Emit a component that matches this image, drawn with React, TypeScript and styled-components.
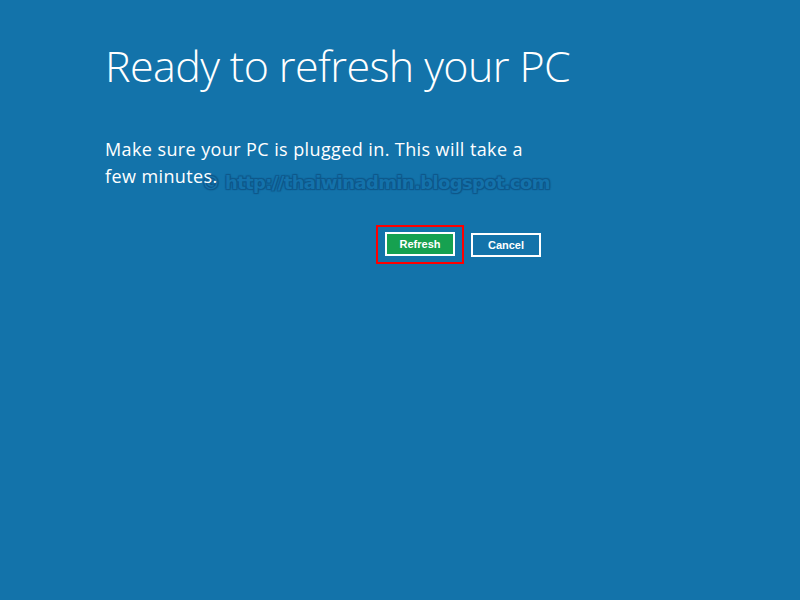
import React from "react";
import styled, { createGlobalStyle } from "styled-components";

const Global = createGlobalStyle`
  html, body { margin: 0; padding: 0; background: #1373aa; }
  body { width: 800px; height: 600px; overflow: hidden; }
  #root { width: 800px; height: 600px; }
`;

const Screen = styled.div`
  width: 800px;
  height: 600px;
  background: #1373aa;
  color: #ffffff;
  box-sizing: border-box;
  padding: 37px 0 0 105px;
  font-family: "Open Sans", "Noto Sans", sans-serif;
`;

const Content = styled.div`
  width: 436px;
  display: flex;
  flex-direction: column;
`;

const Title = styled.h1`
  margin: 0;
  font-weight: 300;
  font-size: 43px;
  line-height: 58px;
  letter-spacing: -0.6px;
  white-space: nowrap;
`;

const MessageWrap = styled.div`
  position: relative;
  margin-top: 41px;
`;

const Message = styled.p`
  position: relative;
  z-index: 1;
  margin: 0;
  font-size: 18px;
  line-height: 27px;
  font-weight: 400;
  letter-spacing: 0.4px;
  width: 436px;
`;

const Watermark = styled.div`
  position: absolute;
  z-index: 0;
  left: 97px;
  top: 36px;
  white-space: nowrap;
  font-family: "DejaVu Sans", "Verdana", sans-serif;
  font-weight: bold;
  font-size: 18px;
  letter-spacing: -0.65px;
  color: #1472ab;
  text-shadow: -1px -1px 1px #0f5789, 1px -1px 1px #0f5789, -1px 1px 1px #0f5789,
    1px 1px 1px #0f5789;
`;

const Actions = styled.div`
  display: flex;
  justify-content: flex-end;
  align-items: center;
  gap: 7px;
  margin-top: 35px;
`;

const Highlight = styled.div`
  border: 2px solid #ff0000;
  padding: 5px 7px 6px 7px;
  display: flex;
`;

const Button = styled.button<{ $primary?: boolean }>`
  box-sizing: border-box;
  width: 70px;
  height: 24px;
  border: 2px solid #ffffff;
  background: ${(p) => (p.$primary ? "#16a150" : "transparent")};
  color: #ffffff;
  font-family: "Liberation Sans", Arial, sans-serif;
  font-weight: bold;
  font-size: 11px;
  padding: 0;
  cursor: pointer;
`;

export default function App() {
  return (
    <>
      <Global />
      <Screen>
        <Content>
          <Title>Ready to refresh your PC</Title>
          <MessageWrap>
            <Message>
              Make sure your PC is plugged in. This will take a few minutes.
            </Message>
            <Watermark>© http://thaiwinadmin.blogspot.com</Watermark>
          </MessageWrap>
          <Actions>
            <Highlight>
              <Button $primary>Refresh</Button>
            </Highlight>
            <Button>Cancel</Button>
          </Actions>
        </Content>
      </Screen>
    </>
  );
}
